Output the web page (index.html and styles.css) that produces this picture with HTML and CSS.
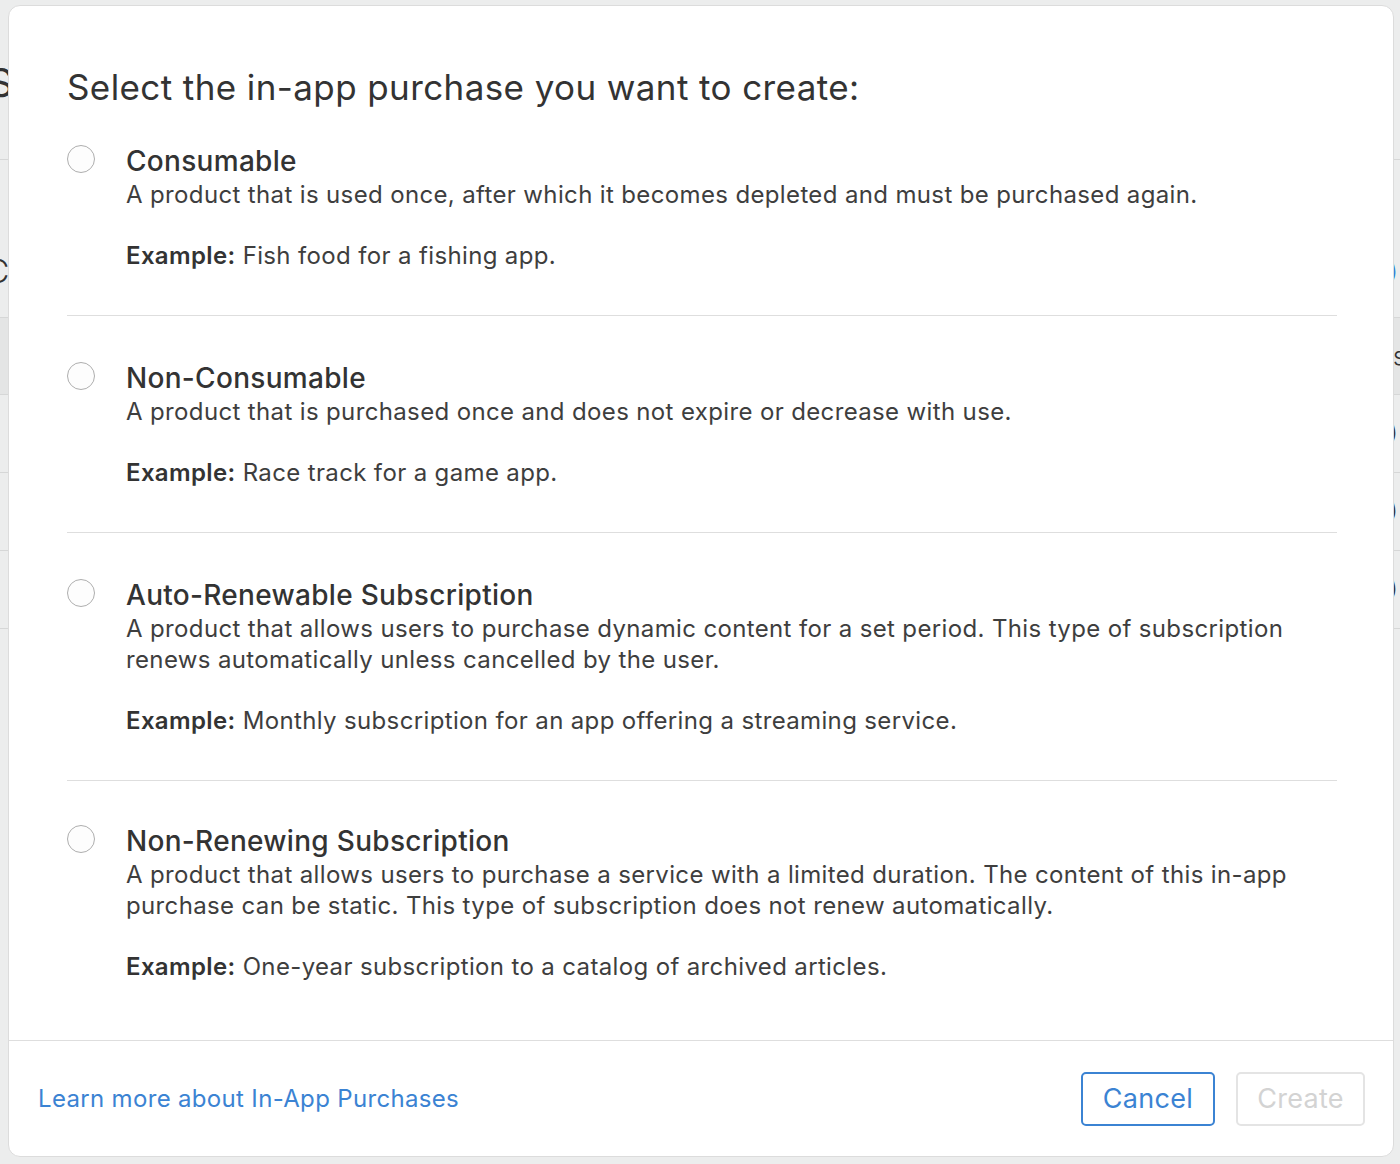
FILE: index.html
```html
<!DOCTYPE html>
<html lang="en">
<head>
<meta charset="utf-8">
<title>Select in-app purchase</title>
<link rel="stylesheet" href="styles.css">
</head>
<body>
<div class="page">
  <div class="page-head"><span class="peek-l big">S</span></div>
  <div class="page-row"><span class="peek-l mid">C</span><span class="peek-r blue">)</span></div>
  <div class="page-row band"><span class="peek-r">s</span></div>
  <div class="page-row short"><span class="peek-r">)</span></div>
  <div class="page-row short"><span class="peek-r">)</span></div>
  <div class="page-row short"><span class="peek-r">)</span></div>
</div>

<div class="modal" role="dialog">
  <div class="modal-body">
    <h1 class="modal-title">Select the in-app purchase you want to create:</h1>
    <ul class="options">
      <li class="option">
        <span class="radio"></span>
        <div class="option-text">
          <h2 class="option-title">Consumable</h2>
          <p class="option-desc">A product that is used once, after which it becomes depleted and must be purchased again.</p>
          <p class="option-example"><b>Example:</b> Fish food for a fishing app.</p>
        </div>
      </li>
      <li class="option">
        <span class="radio"></span>
        <div class="option-text">
          <h2 class="option-title">Non-Consumable</h2>
          <p class="option-desc">A product that is purchased once and does not expire or decrease with use.</p>
          <p class="option-example"><b>Example:</b> Race track for a game app.</p>
        </div>
      </li>
      <li class="option">
        <span class="radio"></span>
        <div class="option-text">
          <h2 class="option-title">Auto-Renewable Subscription</h2>
          <p class="option-desc">A product that allows users to purchase dynamic content for a set period. This type of subscription renews automatically unless cancelled by the user.</p>
          <p class="option-example"><b>Example:</b> Monthly subscription for an app offering a streaming service.</p>
        </div>
      </li>
      <li class="option">
        <span class="radio"></span>
        <div class="option-text">
          <h2 class="option-title">Non-Renewing Subscription</h2>
          <p class="option-desc">A product that allows users to purchase a service with a limited duration. The content of this in-app purchase can be static. This type of subscription does not renew automatically.</p>
          <p class="option-example"><b>Example:</b> One-year subscription to a catalog of archived articles.</p>
        </div>
      </li>
    </ul>
  </div>
  <div class="modal-footer">
    <a class="learn-link" href="#">Learn more about In-App Purchases</a>
    <div class="buttons">
      <button class="btn btn-cancel" type="button">Cancel</button>
      <button class="btn btn-create" type="button" disabled>Create</button>
    </div>
  </div>
</div>
</body>
</html>
```

FILE: styles.css
```css
* { box-sizing: border-box; }

html, body {
  margin: 0;
  padding: 0;
}

body {
  width: 1400px;
  height: 1164px;
  overflow: hidden;
  background: #eceded;
  font-family: Inter, "Noto Sans", "Liberation Sans", sans-serif;
  color: #333;
  position: relative;
}

/* background page peeking out behind the modal */
.page {
  width: 1400px;
}
.page-head {
  height: 160px;
  border-bottom: 1px solid #d6d7d7;
  position: relative;
}
.page-row {
  height: 158px;
  border-bottom: 1px solid #d6d7d7;
  position: relative;
}
.page-row.band {
  height: 77px;
  background: #e4e5e5;
}
.page-row.short {
  height: 78px;
}
.peek-l, .peek-r {
  position: absolute;
  font-size: 22px;
  font-weight: 300;
  color: #333;
}
.peek-l { left: -12px; }
.peek-r { left: 1390px; }
.peek-l.big { top: 58px; font-size: 40px; font-weight: 400; }
.peek-l.mid { left: -14px; top: 92px; font-size: 32px; }
.page-row .peek-r.blue { top: 98px; color: #2f7fd6; }
.page-row.band .peek-r { left: 1393px; top: 24px; font-size: 24px; }
.page-row.short .peek-r { top: 24px; }

/* modal */
.modal {
  position: absolute;
  left: 8px;
  top: 5px;
  width: 1386px;
  height: 1152px;
  background: #fff;
  border: 1px solid #dcdcdc;
  border-radius: 12px;
  display: flex;
  flex-direction: column;
  overflow: hidden;
}

.modal-body {
  flex: 1;
  padding: 60px 56px 0 58px;
}

.modal-title {
  margin: 0;
  font-size: 35px;
  line-height: 42px;
  font-weight: 400;
  letter-spacing: 0.4px;
  color: #333;
}

.options {
  list-style: none;
  margin: 0;
  padding: 0;
}

.option {
  display: flex;
  gap: 31px;
  padding: 45px 0 44px;
  border-bottom: 1px solid #dedede;
}
.option:first-child { padding-top: 36px; }
.option:last-child { border-bottom: none; padding-top: 43px; }

.radio {
  flex: none;
  width: 28px;
  height: 28px;
  margin-top: 1px;
  border: 1.5px solid #aeaeae;
  border-radius: 50%;
  background: #fdfdfd;
}

.option-text { flex: 1; }

.option-title {
  margin: 0;
  font-size: 28px;
  line-height: 35px;
  font-weight: 500;
  letter-spacing: 0.3px;
  color: #333;
}

.option-desc,
.option-example {
  margin: 0;
  font-size: 24px;
  line-height: 31px;
  letter-spacing: 0.36px;
  color: #3e3e3e;
}
.option-example { margin-top: 30px; }
.option-example b { font-weight: 600; color: #333; }

.modal-footer {
  flex: none;
  height: 116px;
  border-top: 1px solid #dedede;
  display: flex;
  align-items: center;
  justify-content: space-between;
  padding: 0 28px 0 29px;
}

.learn-link {
  font-size: 24px;
  letter-spacing: 0.33px;
  color: #3b83d3;
  text-decoration: none;
}

.buttons {
  display: flex;
  gap: 21px;
}

.btn {
  height: 54px;
  border-radius: 5px;
  background: #fff;
  font-family: inherit;
  font-size: 27px;
  letter-spacing: 0.3px;
  padding: 0;
}
.btn-cancel {
  width: 134px;
  border: 2px solid #3b83d3;
  color: #3b83d3;
}
.btn-create {
  width: 129px;
  border: 2px solid #e4e4e4;
  color: #d3d3d3;
}
```
